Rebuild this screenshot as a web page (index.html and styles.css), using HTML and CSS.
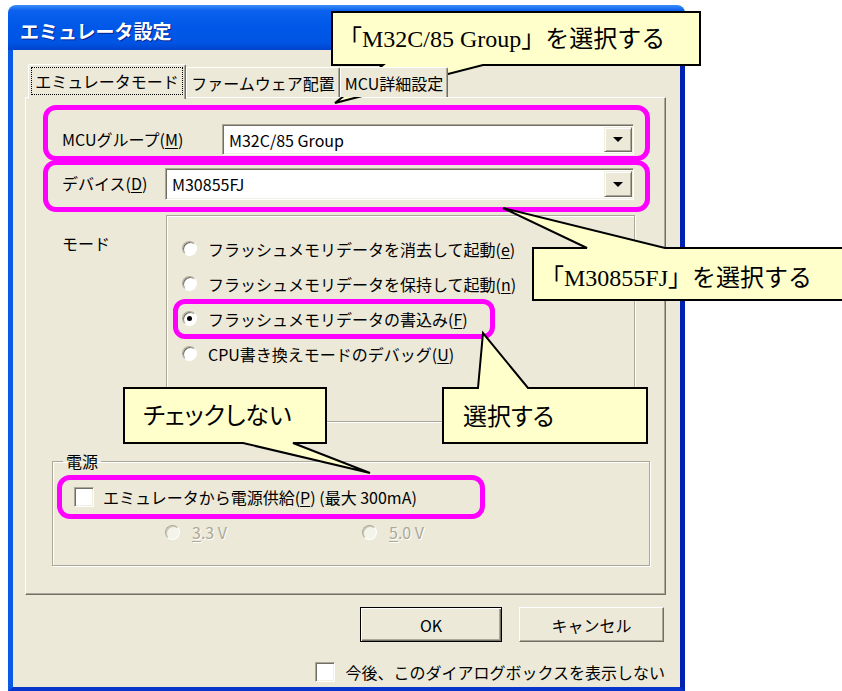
FILE: index.html
```html
<!DOCTYPE html>
<html lang="ja">
<head>
    <meta charset="UTF-8">
    <title>エミュレータ設定</title>
    <link rel="stylesheet" href="styles.css">
</head>
<body>
    <div class="window">
        <div class="titlebar"><span class="title">エミュレータ設定</span></div>
        <div class="client">
            <div class="tabs">
                <div class="tab active"><span class="focus">エミュレータモード</span></div>
                <div class="tab tab-fw">ファームウェア配置</div>
                <div class="tab tab-mcu">MCU詳細設定</div>
            </div>
            <div class="panel">
                <div class="field field-mcu">
                    <span class="lbl lbl-mcu">MCUグループ(<u>M</u>)</span>
                    <div class="combo combo-mcu"><span class="val">M32C/85 Group</span><span class="drop"></span></div>
                </div>
                <div class="field field-dev">
                    <span class="lbl lbl-dev">デバイス(<u>D</u>)</span>
                    <div class="combo combo-dev"><span class="val">M30855FJ</span><span class="drop"></span></div>
                </div>
                <div class="mode">
                    <span class="mode-lbl">モード</span>
                    <div class="mode-frame">
                        <div class="opt"><span class="radio"></span><span class="opt-text">フラッシュメモリデータを消去して起動(<u>e</u>)</span></div>
                        <div class="opt"><span class="radio"></span><span class="opt-text">フラッシュメモリデータを保持して起動(<u>n</u>)</span></div>
                        <div class="opt">
                            <span class="hl-opt"><span class="radio on"></span><span class="opt-text">フラッシュメモリデータの書込み(<u>F</u>)</span></span>
                        </div>
                        <div class="opt"><span class="radio"></span><span class="opt-text">CPU書き換えモードのデバッグ(<u>U</u>)</span></div>
                    </div>
                </div>
                <fieldset class="power">
                    <legend>電源</legend>
                    <div class="hl-chk"><span class="check"></span><span class="chk-text">エミュレータから電源供給(<u>P</u>) (最大 300mA)</span></div>
                    <div class="volts">
                        <span class="volt volt-33"><span class="radio off"></span><span class="volt-text"><u>3</u>.3 V</span></span>
                        <span class="volt"><span class="radio off"></span><span class="volt-text"><u>5</u>.0 V</span></span>
                    </div>
                </fieldset>
            </div>
            <div class="buttons">
                <button class="btn btn-ok">OK</button>
                <button class="btn btn-cancel">キャンセル</button>
            </div>
            <div class="dont-show"><span class="check"></span><span>今後、このダイアログボックスを表示しない</span></div>
        </div>
    </div>

    <!-- 吹き出し -->
    <svg class="callouts" width="842" height="691" viewBox="0 0 842 691">
        <path d="M332,12 H700 V65 H483 L335,103 L383,65 H332 Z"/>
        <path d="M533,248 H587 L503,208 L665,248 H846 V300 H533 Z"/>
        <path d="M443,388 H478 L483,333 L528,388 H647 V443 H443 Z"/>
        <path d="M124,388 H326 V443 H293 L370,473 L243,443 H124 Z"/>
    </svg>
    <div class="note note-mcu">「<span>M32C/85 Group</span>」を選択する</div>
    <div class="note note-dev">「<span>M30855FJ</span>」を選択する</div>
    <div class="note note-sel">選択する</div>
    <div class="note note-chk">チェックしない</div>
</body>
</html>
```

FILE: styles.css
```css
* {
    box-sizing: border-box;
}
body {
    margin: 0;
    width: 842px;
    height: 691px;
    overflow: hidden;
    position: relative;
    background-color: #ffffff;
    font-family: "Noto Sans CJK JP", sans-serif;
    font-size: 16px;
    color: #000;
}
u {
    text-decoration-thickness: 1px;
    text-underline-offset: 2px;
}

/* ウィンドウ枠 */
.window {
    margin: 5px 0 0 8px;
    width: 677px;
}
.titlebar {
    height: 45px;
    border-radius: 8px 8px 0 0;
    background: linear-gradient(#3d8ff7 0%, #0c62ee 12%, #0058e8 45%, #0054e3 85%, #0042cc 100%);
    padding: 6px 0 0 12px;
    display: flex;
    align-items: center;
}
.title {
    color: #fff;
    font-weight: bold;
    font-size: 19px;
    line-height: 22px;
    text-shadow: 1px 1px 0 #0a1e8c;
}
.client {
    height: 641px;
    background-color: #ece9d8;
    border-style: solid;
    border-width: 0 5px 4px 5px;
    border-color: #0a5ae8 #0021b2 #0836cc #0a5ae8;
    padding: 14px 14px 0 12px;
}

/* タブ */
.tabs {
    position: relative;
    z-index: 1;
    display: flex;
    align-items: flex-end;
    height: 33px;
    padding-left: 3px;
}
.tab {
    height: 30px;
    border: 1px solid;
    border-color: #fff #716f64 transparent #fff;
    border-bottom: none;
    border-radius: 2px 2px 0 0;
    box-shadow: inset -1px 0 0 #aca899;
    display: flex;
    align-items: center;
    justify-content: center;
    line-height: 18px;
    background-color: #ece9d8;
}
.tab.active {
    width: 158px;
    height: 35px;
    margin-bottom: -2px;
    padding: 2px 2px 4px 2px;
}
.tab-fw {
    width: 154px;
}
.tab-mcu {
    width: 108px;
}
.focus {
    width: 100%;
    height: 100%;
    border: 1px dotted #000;
    display: flex;
    align-items: center;
    justify-content: center;
}
.panel {
    height: 498px;
    border: 1px solid;
    border-color: #fff #716f64 #716f64 #fff;
    box-shadow: inset -1px -1px 0 #aca899;
}

/* MCUグループ / デバイス */
.field {
    display: flex;
    margin-left: 23px;
    width: 595px;
    padding-left: 13px;
    outline: 5px solid #ff00ff;
    outline-offset: 1px;
    border-radius: 7px;
}
.field-mcu {
    margin-top: 13px;
    height: 44px;
    align-items: flex-end;
}
.field-dev {
    margin-top: 11px;
    height: 40px;
    align-items: flex-start;
    padding-top: 2px;
}
.lbl {
    line-height: 31px;
    white-space: nowrap;
}
.lbl-mcu {
    width: 160px;
}
.lbl-dev {
    width: 103px;
}
.combo {
    display: flex;
    align-items: stretch;
    background-color: #fff;
    border: 1px solid;
    border-color: #aca899 #fff #fff #aca899;
    box-shadow: inset 1px 1px 0 #716f64, inset -1px -1px 0 #f1efe2;
    padding: 2px 1px 2px 6px;
}
.combo-mcu {
    width: 412px;
    height: 31px;
}
.combo-dev {
    width: 469px;
    height: 32px;
}
.val {
    flex: 1;
    display: flex;
    align-items: center;
    line-height: 18px;
}
.drop {
    width: 28px;
    background-color: #ece9d8;
    border: 1px solid;
    border-color: #f1efe2 #716f64 #716f64 #f1efe2;
    box-shadow: inset 1px 1px 0 #fff, inset -1px -1px 0 #aca899;
    display: flex;
    align-items: center;
    justify-content: center;
}
.drop::after {
    content: "";
    border-left: 5px solid transparent;
    border-right: 5px solid transparent;
    border-top: 5px solid #000;
}

/* モード */
.mode {
    display: flex;
    margin: 9px 0 0 23px;
    padding-left: 13px;
}
.mode-lbl {
    width: 104px;
    margin-top: 19px;
    line-height: 18px;
}
.mode-frame {
    width: 469px;
    height: 207px;
    border: 1px solid #aca899;
    box-shadow: inset 1px 1px 0 #fff, 1px 1px 0 #fff;
    padding: 15px 0 0 15px;
}
.opt {
    height: 35px;
    display: flex;
    align-items: center;
}
.opt-text {
    margin-left: 11px;
    line-height: 18px;
    white-space: nowrap;
}
.hl-opt {
    display: flex;
    align-items: center;
    width: 310px;
    height: 28px;
    margin-left: -3px;
    padding-left: 3px;
    outline: 5px solid #ff00ff;
    outline-offset: 1px;
    border-radius: 6px;
}
.radio {
    flex: none;
    position: relative;
    width: 15px;
    height: 15px;
    border-radius: 50%;
    background-color: #fff;
    border: 1px solid;
    border-color: #aca899 #fff #fff #aca899;
    box-shadow: inset 1px 1px 0 #716f64;
}
.radio.on::after {
    content: "";
    position: absolute;
    left: 4px;
    top: 4px;
    width: 5px;
    height: 5px;
    border-radius: 50%;
    background-color: #000;
}
.radio.off {
    background-color: #f5f4ea;
    box-shadow: inset 1px 1px 0 #cac8bb;
}

/* 電源 */
.power {
    margin: 30px 0 0 26px;
    width: 598px;
    padding: 0 0 23px 0;
    border: 1px solid #aca899;
    box-shadow: inset 1px 1px 0 #fff, 1px 1px 0 #fff;
    min-inline-size: 0;
}
.power legend {
    margin-left: 10px;
    padding: 0 3px;
    line-height: 18px;
}
.hl-chk {
    display: flex;
    align-items: center;
    margin: 11px 0 0 10px;
    width: 416px;
    height: 32px;
    padding-left: 11px;
    outline: 5px solid #ff00ff;
    outline-offset: 1px;
    border-radius: 7px;
}
.check {
    flex: none;
    width: 20px;
    height: 20px;
    background-color: #fff;
    border: 1px solid;
    border-color: #aca899 #fff #fff #aca899;
    box-shadow: inset 1px 1px 0 #716f64, inset -1px -1px 0 #f1efe2;
}
.chk-text {
    margin-left: 9px;
    line-height: 18px;
    white-space: nowrap;
}
.volts {
    display: flex;
    align-items: center;
    height: 20px;
    margin-top: 9px;
    padding-left: 112px;
}
.volt {
    display: flex;
    align-items: center;
}
.volt-33 {
    width: 197px;
}
.volt-text {
    margin-left: 12px;
    color: #aca899;
    text-shadow: 1px 1px 0 #fff;
    line-height: 18px;
}

/* ボタン */
.buttons {
    display: flex;
    justify-content: flex-end;
    gap: 17px;
    margin-top: 12px;
    padding-right: 2px;
}
.btn {
    height: 35px;
    font-family: inherit;
    font-size: 16px;
    line-height: 18px;
    color: #000;
    background-color: #ece9d8;
    padding: 0;
}
.btn-ok {
    width: 142px;
    border: 1px solid #000;
    box-shadow: inset 1px 1px 0 #fff, inset -1px -1px 0 #716f64, inset -2px -2px 0 #aca899;
}
.btn-cancel {
    width: 145px;
    border: 1px solid;
    border-color: #fff #716f64 #716f64 #fff;
    box-shadow: inset -1px -1px 0 #aca899;
}
.dont-show {
    display: flex;
    justify-content: flex-end;
    align-items: center;
    gap: 10px;
    margin-top: 20px;
    padding-right: 1px;
    line-height: 18px;
}

/* 吹き出し */
.callouts {
    position: absolute;
    left: 0;
    top: 0;
}
.callouts path {
    fill: #ffffcc;
    stroke: #000;
    stroke-width: 2;
}
.note {
    position: absolute;
    font-family: "Liberation Serif", "Noto Sans CJK JP", serif;
    font-size: 24px;
    line-height: 28px;
    white-space: nowrap;
}
.note-mcu {
    left: 338px;
    top: 25px;
}
.note-dev {
    left: 540px;
    top: 264px;
}
.note-sel {
    left: 463px;
    top: 403px;
    font-feature-settings: "palt";
}
.note-chk {
    left: 143px;
    top: 402px;
    font-feature-settings: "palt";
}
```
